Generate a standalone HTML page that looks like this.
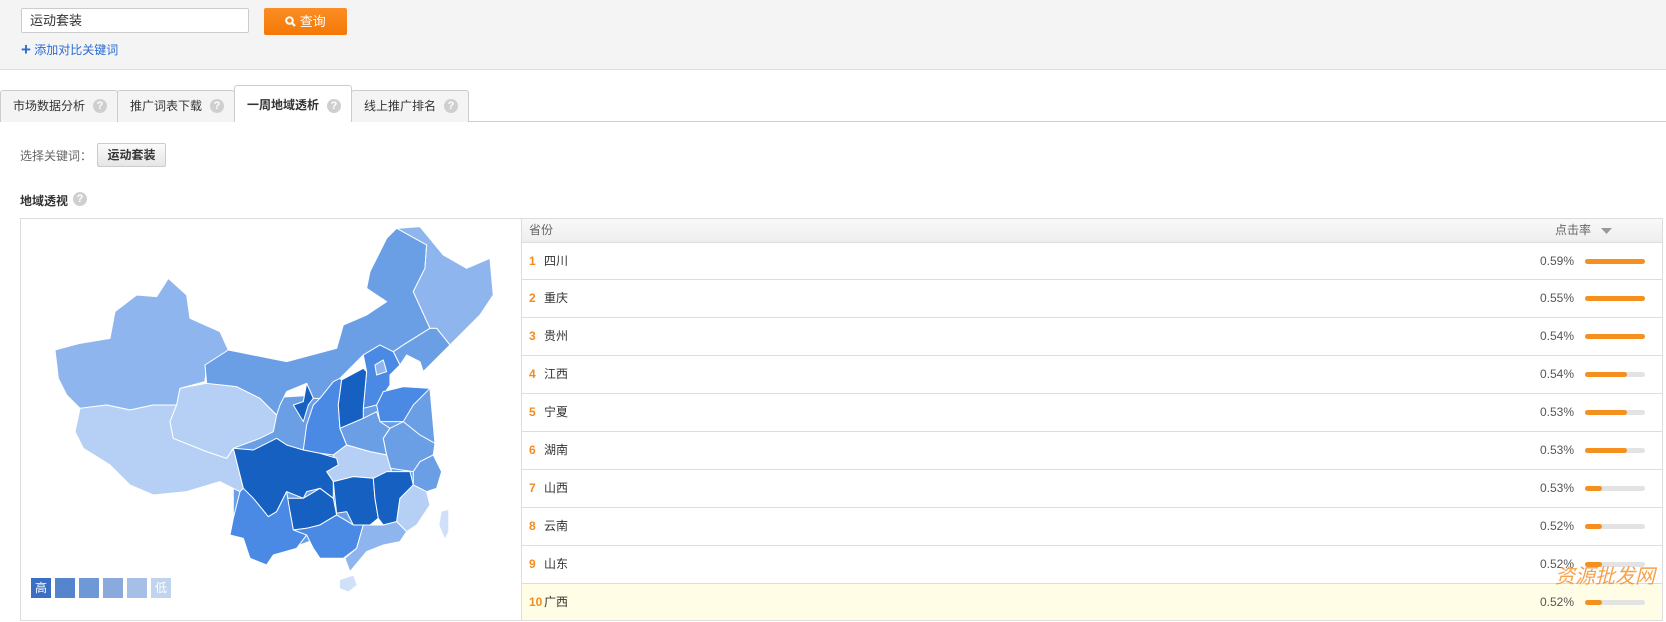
<!DOCTYPE html>
<html><head><meta charset="utf-8"><style>
*{margin:0;padding:0;box-sizing:border-box}
body{width:1666px;height:622px;position:relative;background:#fff;font-family:"Liberation Sans","Noto Sans CJK SC",sans-serif;font-size:12px;color:#333;overflow:hidden}
.a{position:absolute}
.q{position:absolute;width:14px;height:14px;border-radius:50%;background:#cfcfcf;color:#fff;font-size:11px;font-weight:bold;text-align:center;line-height:14px}
.tab{position:absolute;top:90px;height:32px;background:#f4f4f4;border:1px solid #ccc;border-bottom:none;border-radius:3px 3px 0 0;font-size:12px;line-height:30px;padding-left:12px}
.row{position:absolute;left:522px;width:1140px;height:38px;border-top:1px solid #ddd;line-height:36px}
.rk{position:absolute;left:7px;top:0;color:#f58a1f;font-weight:bold}
.nm{position:absolute;left:22px;top:0}
.pc{position:absolute;right:88px;top:0;color:#555}
.bg{position:absolute;left:1063px;top:16px;width:60px;height:5px;border-radius:3px;background:#e3e3e3}
.fg{position:absolute;left:0;top:0;height:5px;border-radius:3px;background:#f5901f}
</style></head><body>
<div class="a" style="left:0;top:0;width:1666px;height:70px;background:#f4f4f4;border-bottom:1px solid #ddd"></div>
<div class="a" style="left:21px;top:8px;width:228px;height:25px;background:#fff;border:1px solid #ccc;border-radius:2px;font-size:13px;line-height:23px;padding-left:8px">运动套装</div>
<div class="a" style="left:264px;top:8px;width:83px;height:27px;background:linear-gradient(#fb8d24,#f47806);border-radius:2px;color:#fff;font-size:13px;line-height:27px;text-align:center">
<svg width="11" height="11" viewBox="0 0 11 11" style="vertical-align:-1px"><circle cx="4.5" cy="4.5" r="3.3" fill="none" stroke="#fff" stroke-width="2"/><path d="M7 7L10 10" stroke="#fff" stroke-width="2.2"/></svg> 查询</div>
<div class="a" style="left:21px;top:42px;color:#2a6bd0;font-size:12px;line-height:16px"><span style="font-size:17px;font-weight:bold;vertical-align:-1px">+</span> 添加对比关键词</div>

<div class="a" style="left:0;top:121px;width:1666px;height:1px;background:#ccc"></div>
<div class="tab" style="left:0;width:118px">市场数据分析<span class="q" style="left:92px;top:8px">?</span></div>
<div class="tab" style="left:117px;width:118px">推广词表下载<span class="q" style="left:92px;top:8px">?</span></div>
<div class="tab" style="left:234px;top:85px;height:37px;width:118px;background:#fff;font-weight:bold;line-height:32px;padding-top:3px">一周地域透析<span class="q" style="left:92px;top:13px">?</span></div>
<div class="tab" style="left:351px;width:118px">线上推广排名<span class="q" style="left:92px;top:8px">?</span></div>

<div class="a" style="left:20px;top:147px;color:#666">选择关键词：</div>
<div class="a" style="left:97px;top:143px;width:69px;height:24px;border:1px solid #ccc;border-radius:2px;background:linear-gradient(#fafafa,#e6e6e6);text-align:center;line-height:22px;font-weight:bold;font-size:12px">运动套装</div>
<div class="a" style="left:20px;top:192px;font-weight:bold">地域透视</div>
<span class="q" style="left:73px;top:192px">?</span>

<div class="a" style="left:20px;top:218px;width:1643px;height:403px;border:1px solid #ddd"></div>
<svg class="a" style="left:0;top:0" width="522" height="622">
<g transform="translate(20,205) scale(0.3333)" stroke="#fff" stroke-width="3" stroke-linejoin="round">
<polygon fill="#6a9fe6" points="720,580 1230,550 1245,715 1180,840 1000,960 760,1050 640,940 640,730"/>
<polygon fill="#8fb5ee" points="105,435 180,415 270,400 285,320 350,270 410,275 445,220 500,270 510,340 600,380 625,435 560,480 555,530 480,550 470,600 400,600 330,615 260,600 180,610 140,570 115,520"/>
<polygon fill="#b5d0f4" points="180,610 260,600 330,615 400,600 470,600 450,650 460,700 560,740 620,760 640,730 670,850 660,860 600,830 500,860 400,870 330,840 270,780 190,730 165,680"/>
<polygon fill="#b5d0f4" points="480,550 560,535 650,545 720,580 770,630 760,680 720,700 640,730 620,760 560,740 460,700 450,650 470,600"/>
<polygon fill="#6a9fe6" points="625,435 650,440 800,470 950,430 970,360 1040,330 1100,290 1040,250 1050,200 1100,100 1130,70 1200,65 1220,120 1215,190 1180,260 1230,370 1150,420 1120,440 1030,450 960,520 900,580 880,580 860,535 800,560 780,600 770,630 720,580 650,545 560,535 555,480"/>
<polygon fill="#8fb5ee" points="1130,70 1200,65 1270,150 1340,190 1410,160 1420,270 1380,330 1290,420 1250,370 1230,370 1180,260 1215,190 1220,120"/>
<polygon fill="#6a9fe6" points="1230,370 1250,370 1290,420 1210,500 1200,470 1160,450 1140,480 1120,440 1150,420"/>
<polygon fill="#4a8ae4" points="1030,450 1080,420 1120,440 1140,480 1110,510 1110,540 1070,600 1030,610 1040,500"/>
<polygon fill="#8fb5ee" points="1065,480 1090,465 1100,500 1070,510"/>
<polygon fill="#4a8ae4" points="940,530 960,520 965,525 955,600 960,670 980,720 940,750 900,745 850,735 860,660 880,600 900,580"/>
<polygon fill="#1560c0" points="1030,490 1040,500 1030,610 1030,640 960,670 955,600 965,525"/>
<polygon fill="#1560c0" points="860,535 850,590 820,600 850,650 865,600 880,580"/>
<polygon fill="#4a8ae4" points="1090,560 1150,545 1230,550 1180,600 1150,650 1080,650 1070,600"/>
<polygon fill="#6a9fe6" points="960,670 1030,640 1070,620 1080,650 1110,670 1090,700 1100,750 1050,740 980,720"/>
<polygon fill="#6a9fe6" points="1110,670 1150,650 1200,690 1245,715 1240,750 1200,770 1180,800 1110,790 1100,750 1090,700"/>
<polygon fill="#b5d0f4" points="940,750 980,720 1050,740 1100,750 1115,800 1060,820 1000,815 940,830 920,800 950,780"/>
<polygon fill="#1560c0" points="640,730 700,735 770,700 800,720 850,735 900,745 950,760 955,780 920,800 940,830 940,880 900,850 860,860 850,880 800,860 770,920 745,935 700,880 670,850"/>
<polygon fill="#1560c0" points="800,880 850,880 900,850 940,880 950,930 900,960 860,970 820,975 810,920"/>
<polygon fill="#1560c0" points="940,830 1000,815 1060,820 1065,880 1075,940 1050,960 1000,960 980,920 950,925 945,880"/>
<polygon fill="#1560c0" points="1060,820 1100,800 1170,800 1180,840 1140,880 1130,950 1090,960 1075,940 1065,880"/>
<polygon fill="#6a9fe6" points="1180,800 1200,770 1240,750 1265,800 1250,850 1220,860 1180,840"/>
<polygon fill="#b5d0f4" points="1180,840 1220,860 1230,900 1190,960 1160,980 1130,950 1140,880"/>
<polygon fill="#4a8ae4" points="670,850 700,880 745,935 770,920 800,860 810,920 820,975 860,990 830,1030 760,1050 740,1080 690,1060 670,1000 630,990 640,940 660,860"/>
<polygon fill="#4a8ae4" points="820,975 860,970 900,960 950,930 1000,960 1030,960 1010,1030 970,1060 900,1060 880,1030 860,990"/>
<polygon fill="#8fb5ee" points="1030,960 1050,960 1090,960 1130,950 1160,980 1140,1010 1090,1020 1040,1040 990,1100 975,1060 1010,1030"/>
<polygon fill="#cfe0f8" stroke="none" points="1265,920 1285,915 1285,980 1275,1000 1258,960"/>
<polygon fill="#cfe0f8" stroke="none" points="960,1125 1000,1112 1010,1140 985,1160 960,1150"/>
</g>
<g font-size="12" text-anchor="middle">
<rect x="31" y="578" width="20" height="20" fill="#3a6fc4"/><text x="41" y="592" fill="#fff">高</text>
<rect x="55" y="578" width="20" height="20" fill="#5585cd"/>
<rect x="79" y="578" width="20" height="20" fill="#6f98d6"/>
<rect x="103" y="578" width="20" height="20" fill="#8aaadd"/>
<rect x="127" y="578" width="20" height="20" fill="#a5bfe6"/>
<rect x="151" y="578" width="20" height="20" fill="#c0d4ef"/><text x="161" y="592" fill="#fff">低</text>
</g>
</svg>

<div class="a" style="left:521px;top:218px;width:1px;height:403px;background:#ddd"></div>
<div class="a" style="left:522px;top:219px;width:1140px;height:23px;background:linear-gradient(#f9f9f9,#eee);color:#666;line-height:23px">
<span class="a" style="left:7px;top:0">省份</span><span class="a" style="left:1033px;top:0">点击率</span>
<svg class="a" style="left:1079px;top:9px" width="11" height="7"><path d="M0 0H11L5.5 6Z" fill="#999"/></svg></div>
<div class="row" style="top:242px"><span class="rk">1</span><span class="nm">四川</span><span class="pc">0.59%</span><div class="bg"><div class="fg" style="width:60px"></div></div></div>
<div class="row" style="top:279px"><span class="rk">2</span><span class="nm">重庆</span><span class="pc">0.55%</span><div class="bg"><div class="fg" style="width:60px"></div></div></div>
<div class="row" style="top:317px"><span class="rk">3</span><span class="nm">贵州</span><span class="pc">0.54%</span><div class="bg"><div class="fg" style="width:60px"></div></div></div>
<div class="row" style="top:355px"><span class="rk">4</span><span class="nm">江西</span><span class="pc">0.54%</span><div class="bg"><div class="fg" style="width:42px"></div></div></div>
<div class="row" style="top:393px"><span class="rk">5</span><span class="nm">宁夏</span><span class="pc">0.53%</span><div class="bg"><div class="fg" style="width:42px"></div></div></div>
<div class="row" style="top:431px"><span class="rk">6</span><span class="nm">湖南</span><span class="pc">0.53%</span><div class="bg"><div class="fg" style="width:42px"></div></div></div>
<div class="row" style="top:469px"><span class="rk">7</span><span class="nm">山西</span><span class="pc">0.53%</span><div class="bg"><div class="fg" style="width:17px"></div></div></div>
<div class="row" style="top:507px"><span class="rk">8</span><span class="nm">云南</span><span class="pc">0.52%</span><div class="bg"><div class="fg" style="width:17px"></div></div></div>
<div class="row" style="top:545px"><span class="rk">9</span><span class="nm">山东</span><span class="pc">0.52%</span><div class="bg"><div class="fg" style="width:17px"></div></div></div>
<div class="row" style="top:583px;height:37px;background:#fffde6"><span class="rk">10</span><span class="nm">广西</span><span class="pc">0.52%</span><div class="bg"><div class="fg" style="width:17px"></div></div></div>
<div class="a" style="left:1555px;top:560px;color:#f58a1f;font-size:20px;font-style:italic;opacity:.8">资源批发网</div>
</body></html>
